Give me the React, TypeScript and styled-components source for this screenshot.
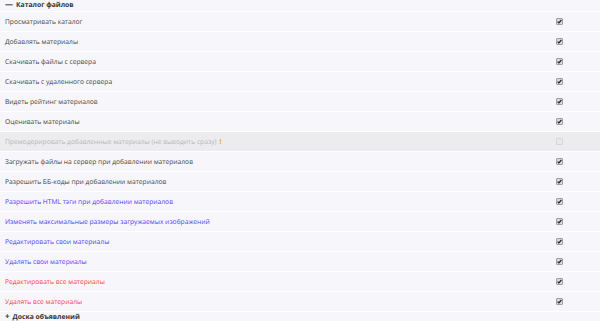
import React from "react";
import styled, { createGlobalStyle } from "styled-components";

const Global = createGlobalStyle`
  html, body { margin: 0; padding: 0; background: #f6f6fb; }
  body {
    font-family: "Open Sans", "DejaVu Sans", sans-serif;
    overflow: hidden;
    text-rendering: geometricPrecision;
  }
`;

const Page = styled.div`
  width: 600px;
`;

const SectionHeader = styled.div`
  display: flex;
  align-items: flex-start;
  gap: 3px;
  height: 12px;
  padding-left: 5px;
  font-size: 6.8px;
  line-height: 9px;
  font-weight: 700;
  color: #333;
  border-bottom: 1px solid #ffffff;
  box-sizing: border-box;
`;

const Sign = styled.span`
  font-size: 8px;
  font-weight: 700;
  line-height: 9px;
`;

const Row = styled.div<{ $disabled?: boolean }>`
  display: flex;
  align-items: center;
  height: 20px;
  box-sizing: border-box;
  border-bottom: 1px solid #ffffff;
  padding-left: 5px;
  background: ${(p) => (p.$disabled ? "#ececee" : "transparent")};
`;

const Label = styled.span<{ $tone: string }>`
  flex: 1;
  font-size: 6.7px;
  color: ${(p) =>
    p.$tone === "blue"
      ? "#4b3cff"
      : p.$tone === "red"
      ? "#ff3a3a"
      : p.$tone === "muted"
      ? "#b5b5b8"
      : "#444"};
`;

const Warn = styled.span`
  color: #f0a020;
  font-weight: 700;
  margin-left: 3px;
`;

const Box = styled.span<{ $on: boolean }>`
  width: 7px;
  height: 7px;
  margin-right: 37px;
  box-sizing: border-box;
  border-radius: 1px;
  border: 1px solid ${(p) => (p.$on ? "#a0a0a0" : "#d6d6d6")};
  background: ${(p) => (p.$on ? "#d8d8d8" : "#e8e8e8")};
  display: flex;
  align-items: center;
  justify-content: center;
`;

const items: { text: string; tone: string; on: boolean; warn?: boolean }[] = [
  { text: "Просматривать каталог", tone: "base", on: true },
  { text: "Добавлять материалы", tone: "base", on: true },
  { text: "Скачивать файлы с сервера", tone: "base", on: true },
  { text: "Скачивать с удаленного сервера", tone: "base", on: true },
  { text: "Видеть рейтинг материалов", tone: "base", on: true },
  { text: "Оценивать материалы", tone: "base", on: true },
  { text: "Премодерировать добавленные материалы (не выводить сразу)", tone: "muted", on: false, warn: true },
  { text: "Загружать файлы на сервер при добавлении материалов", tone: "base", on: true },
  { text: "Разрешить ББ-коды при добавлении материалов", tone: "base", on: true },
  { text: "Разрешить HTML тэги при добавлении материалов", tone: "blue", on: true },
  { text: "Изменять максимальные размеры загружаемых изображений", tone: "blue", on: true },
  { text: "Редактировать свои материалы", tone: "blue", on: true },
  { text: "Удалять свои материалы", tone: "blue", on: true },
  { text: "Редактировать все материалы", tone: "red", on: true },
  { text: "Удалять все материалы", tone: "red", on: true },
];

function Check({ on }: { on: boolean }) {
  return (
    <Box $on={on}>
      {on && (
        <svg width="5" height="5" viewBox="0 0 5 5">
          <path d="M0.6 2.6 L1.9 3.9 L4.4 1" stroke="#222" strokeWidth="1.2" fill="none" />
        </svg>
      )}
    </Box>
  );
}

export default function App() {
  return (
    <Page>
      <Global />
      <SectionHeader>
        <Sign>—</Sign> Каталог файлов
      </SectionHeader>
      {items.map((it) => (
        <Row key={it.text} $disabled={!it.on}>
          <Label $tone={it.tone}>
            {it.text}
            {it.warn && <Warn>!</Warn>}
          </Label>
          <Check on={it.on} />
        </Row>
      ))}
      <SectionHeader>
        <Sign>+</Sign> Доска объявлений
      </SectionHeader>
    </Page>
  );
}
